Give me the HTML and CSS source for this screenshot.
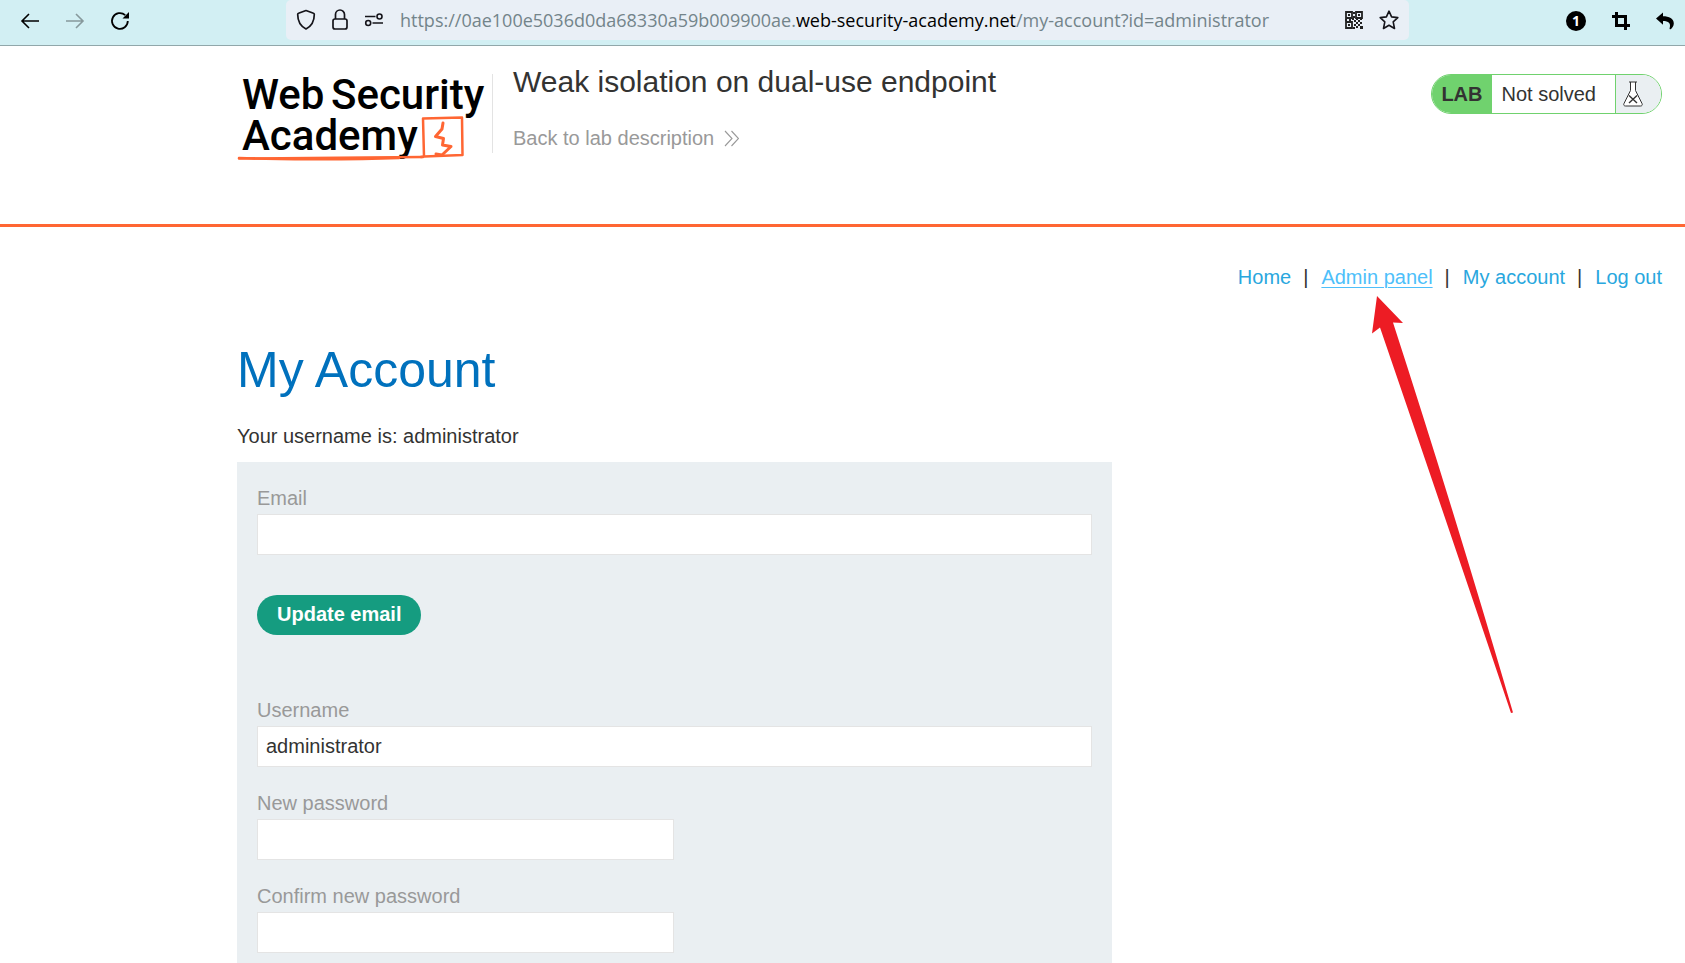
FILE: index.html
```
<!DOCTYPE html>
<html lang="en">
<head>
<meta charset="utf-8">
<title>Weak isolation on dual-use endpoint</title>
<link rel="stylesheet" href="styles.css">
</head>
<body>
<div class="toolbar">
  <div class="toolbar-nav">
    <button class="tool" aria-label="Back"><svg width="20" height="20" viewBox="0 0 20 20" fill="none" stroke="#000" stroke-width="1.6"><path d="M19 10H2M9 3L2 10l7 7"/></svg></button>
    <button class="tool" aria-label="Forward" disabled><svg width="20" height="20" viewBox="0 0 20 20" fill="none" stroke="#87999c" stroke-width="1.6"><path d="M1 10h17M11 3l7 7-7 7"/></svg></button>
    <button class="tool" aria-label="Reload"><svg width="20" height="20" viewBox="0 0 20 20" fill="none" stroke="#000" stroke-width="1.8"><path d="M17.800 10a7.900 7.900 0 1 1-2.600-5.900"/><path d="M19 1v6.500h-6.500z" fill="#000" stroke="none"/></svg></button>
  </div>
  <div class="address">
    <svg width="20" height="22" viewBox="0 0 20 22" fill="none" stroke="#15141a" stroke-width="1.7" stroke-linejoin="round"><path d="M10 1.500l7.500 2.800c.6.200.8.600.8 1.200 0 6-2.300 11.400-8.300 14.500C4 16.900 1.700 11.500 1.700 5.500c0-.6.200-1 .8-1.200z"/></svg>
    <svg width="16" height="22" viewBox="0 0 16 22" fill="none" stroke="#15141a" stroke-width="1.700"><rect x="1" y="10" width="14" height="10" rx="2"/><path d="M3.500 10V5.500a4.500 4.500 0 0 1 9 0V10"/></svg>
    <svg width="20" height="16" viewBox="0 0 20 16" fill="none" stroke="#15141a" stroke-width="1.600"><circle cx="15.500" cy="4.500" r="2.500"/><path d="M1 4.500h10.500M8.500 11h10.500"/><circle cx="4.200" cy="11" r="2.500"/></svg>
    <div class="url" role="textbox" aria-label="Address">https://0ae100e5036d0da68330a59b009900ae.<span class="domain">web-security-academy.net</span>/my-account?id=administrator</div>
    <button class="tool" aria-label="QR code"><svg width="18" height="18" viewBox="0 0 18 18" fill="none" stroke="#222" stroke-width="1.800"><path d="M1 1h6v6H1zM11 1h6v6h-6zM1 11h6v6H1z"/><path fill="#222" stroke="none" d="M3 3h2v2H3zM13 3h2v2h-2zM3 13h2v2H3zM8 1h2v2H8zM8 5h2v2H8zM0 8h2v2H0zM4 8h2v2H4zM7 7h2v2H7zM9 9h2v2H9zM11 7h2v2h-2zM13 9h2v2h-2zM15 7h2v2h-2zM11 11h2v2h-2zM15 11h2v2h-2zM9 13h2v2H9zM13 13h2v2h-2zM11 15h2v2h-2zM15 15h3v3h-3zM8 16h2v2H8z"/></svg></button>
    <button class="tool" aria-label="Bookmark this page"><svg width="20" height="20" viewBox="0 0 20 20" fill="none" stroke="#15141a" stroke-width="1.600" stroke-linejoin="round"><path d="M10 1.200l2.600 5.700 6.200.7-4.600 4.200 1.300 6.700L10 15.200l-5.500 3.300 1.300-6.700L1.200 7.600l6.200-.7z"/></svg></button>
  </div>
  <div class="toolbar-extras">
    <button class="tool badge" aria-label="Notifications">1</button>
    <button class="tool" aria-label="Crop"><svg width="18" height="18" viewBox="0 0 18 18" fill="none" stroke="#000" stroke-width="3"><path d="M0 4.500h13.500V18M4.500 0v13.500H18"/></svg></button>
    <button class="tool" aria-label="Undo"><svg width="18" height="18" viewBox="0 0 18 18"><path d="M0 6.500L7 .5v3.700c6 0 10.800 2 10.800 7.200 0 2.300-1.500 4.600-3.200 5.800-.5.400-1.200-.1-1-.7C15.200 11 12.500 9 7 9v3.800z"/></svg></button>
  </div>
</div>

<header class="lab-header">
  <a class="logo" href="#" aria-label="Web Security Academy">
    <svg width="250" height="92" viewBox="0 0 250 92">
      <g class="logo-text"><text x="5" y="36">Web</text><text x="94" y="36">Security</text><text x="5" y="77">Academy</text></g>
      <g fill="none" stroke="#ff6633" stroke-linejoin="round" stroke-linecap="round"><path stroke-width="2.500" d="M2 85c30 1.500 110 2 160 0M184 84l3-.5-1-38 39-1 .5 37.500-38 1.500"/><path stroke-width="2.500" d="M2 85.500l184-1.500"/><path stroke-width="3" d="M206 50l-1 6-6.500 7.500 8 2-1 6.500 8.500 1.500-9 8.500-6-1"/></g>
    </svg>
  </a>
  <div class="title-block">
    <h2 class="lab-title">Weak isolation on dual-use endpoint</h2>
    <a class="back-link" href="#">Back to lab description
      <svg width="15" height="17" viewBox="0 0 15 17" fill="none" stroke="#999" stroke-width="1.100"><path d="M1 1l7 7.500L1 16M7.500 1l7 7.500-7 7.500"/></svg>
    </a>
  </div>
  <div class="lab-status">
    <span class="lab-tag">LAB</span>
    <span class="lab-state">Not solved</span>
    <span class="lab-flask"><svg width="20" height="26" viewBox="0 0 20 26" fill="#fff" stroke="#333" stroke-width="1"><path d="M6 1h8M7.500 1v8.500L1 22.500c-.7 1.500 0 2.500 1.500 2.500h15c1.500 0 2.200-1 1.500-2.500L12.500 9.500V1"/><path stroke-width="1.400" d="M6 14.500l8 7.500M14 14.500L6 22"/></svg></span>
  </div>
</header>

<main class="page">
  <nav class="top-links">
    <a href="#">Home</a><span>|</span>
    <div class="pointed"><a class="hovered" href="#">Admin panel</a>
      <svg class="pointer" width="144" height="420" viewBox="1370 295 144 420" fill="#ed1c24" aria-hidden="true"><path d="M1377 296l26 27-10-.5q60 185 120 390l-2 .5Q1446 520 1380 327.500l-8 6z"/></svg>
    </div><span>|</span>
    <a href="#">My account</a><span>|</span>
    <a href="#">Log out</a>
  </nav>
  <h1 class="heading">My Account</h1>
  <p class="who">Your username is: administrator</p>
  <div class="panel">
    <form class="email-form">
      <label for="email">Email</label>
      <input id="email" type="email">
      <button class="submit" type="button">Update email</button>
    </form>
    <form class="password-form">
      <div class="field"><label for="username">Username</label><input id="username" type="text" value="administrator"></div>
      <div class="field"><label for="new1">New password</label><input class="half" id="new1" type="password"></div>
      <div class="field"><label for="new2">Confirm new password</label><input class="half" id="new2" type="password"></div>
    </form>
  </div>
</main>
</body>
</html>
```
FILE: styles.css
```
* { box-sizing: border-box; }
html { background: #fff; }
body {
  margin: 0;
  min-height: 100vh;
  font: 20px/32px "Liberation Sans", Arial, sans-serif;
  color: #333332;
  display: flex;
  flex-direction: column;
}
a { color: #29a7de; text-decoration: none; }
svg { display: block; flex: none; }

.toolbar {
  display: flex;
  height: 46px;
  background: #d2eff3;
  border-bottom: 1px solid #91a7aa;
}
.tool { border: 0; padding: 0; background: none; color: #000; }
.toolbar-nav { display: flex; align-items: center; gap: 25px; height: 41px; padding-left: 20px; width: 286px; }
.address {
  flex: 1;
  display: flex;
  align-items: center;
  height: 40px;
  padding: 0 10px;
  gap: 16px;
  background: #e9eff6;
  border-radius: 5px;
}
.url {
  flex: 1;
  font: 18px/24px "Open Sans", "Noto Sans", sans-serif;
  color: #73848a;
  white-space: nowrap;
}
.domain { color: #000; }
.toolbar-extras { display: flex; align-items: center; justify-content: flex-end; gap: 26px; height: 41px; width: 276px; padding-right: 11px; }
.badge {
  width: 20px;
  height: 20px;
  border-radius: 50%;
  background: #000;
  color: #fff;
  font: bold 14px/20px "Noto Sans", sans-serif;
}

.lab-header {
  display: flex;
  align-items: flex-start;
  height: 181px;
  padding: 0 23px 0 237px;
  border-bottom: 3px solid #ff6633;
}
.logo { padding-top: 27px; }
.logo-text { font: 500 42px Roboto, sans-serif; fill: #000; }
.title-block { margin: 28px 0 0 5px; padding-left: 20px; border-left: 1px solid #e3e3e3; height: 79px; }
.lab-title { margin: -8px 0 24px; font-size: 30px; line-height: 32px; font-weight: normal; }
.back-link { display: flex; align-items: center; gap: 10px; line-height: 32px; color: #999; }
.lab-status {
  display: flex;
  margin: 28px 0 0 auto;
  height: 40px;
  line-height: 38px;
  border: 1px solid #70d26e;
  border-radius: 20px;
  overflow: hidden;
}
.lab-tag { padding: 0 9px; background: #70d26e; font-weight: bold; }
.lab-state { padding: 0 19px 0 10px; }
.lab-flask { padding: 6px 18px 0 7px; background: #eaeff2; border-left: 1px solid #70d26e; }

.page { flex: 1; display: flex; flex-direction: column; padding: 34px 23px 0 237px; }
.top-links { display: flex; justify-content: flex-end; gap: 12px; }
.top-links > span { padding-right: 1px; }
.pointed { position: relative; }
.hovered { color: #4ebffa; text-decoration: underline; text-decoration-thickness: 1px; text-underline-offset: 3px; }
.pointer { position: absolute; left: 49px; top: 34px; }
.heading { margin: 49px 0 19px; font-size: 50px; line-height: 56px; font-weight: normal; color: #0071bd; }
.who { margin: 3px 0 10px; }
.panel { flex: 1; width: 61.4%; min-width: 600px; padding: 20px; background: #eaeff2; color: #999; }
label { display: block; }
input {
  display: block;
  width: 100%;
  height: 41px;
  padding: 0 8px;
  border: 1px solid #e4e4e4;
  background: #fff;
  font: inherit;
  color: #333332;
}
.half { width: 50%; }
.submit {
  margin: 40px 0 59px;
  height: 40px;
  padding: 0 20px 2px;
  border: 0;
  border-radius: 20px;
  background: #159c80;
  color: #fff;
  font: bold 20px/38px "Liberation Sans", Arial, sans-serif;
}
.email-form { display: flex; flex-direction: column; align-items: flex-start; }
.password-form { display: grid; gap: 20px; }
```
